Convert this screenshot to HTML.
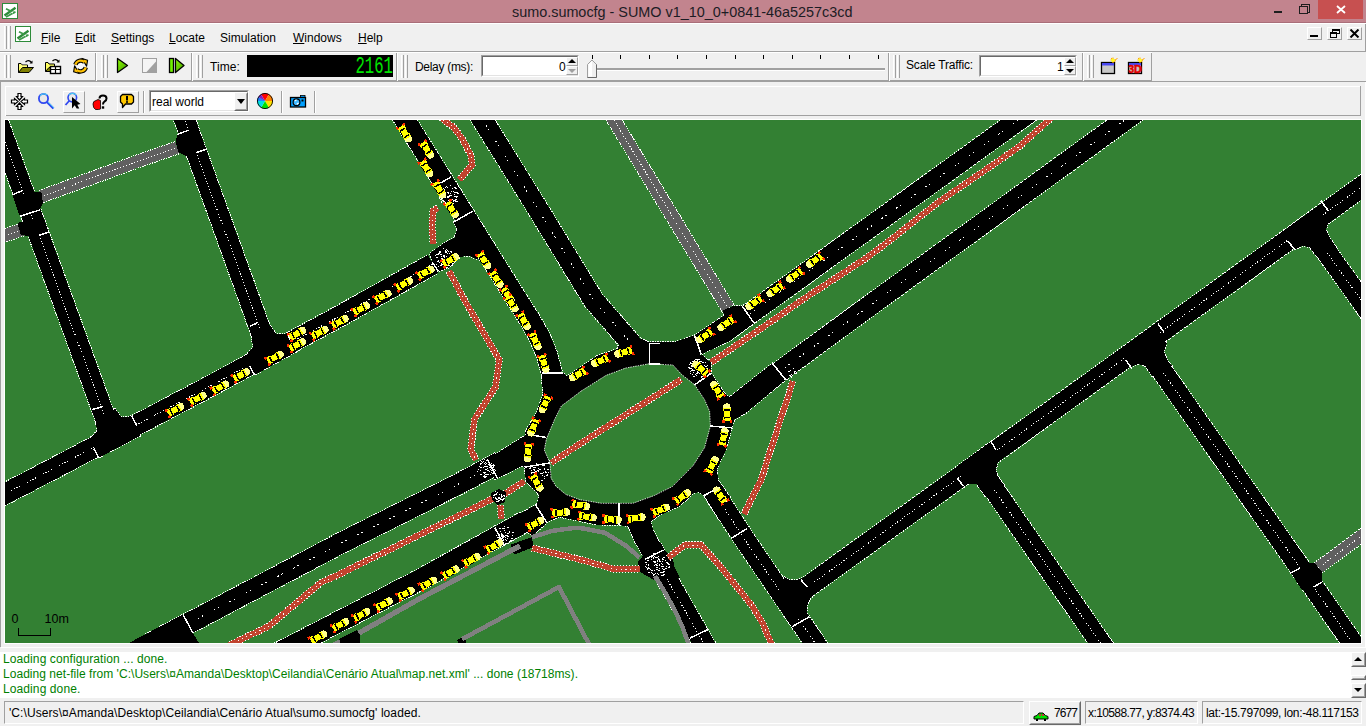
<!DOCTYPE html>
<html lang="en">
<head>
<meta charset="utf-8">
<title>sumo.sumocfg - SUMO v1_10_0+0841-46a5257c3cd</title>
<style>
*{box-sizing:border-box;margin:0;padding:0}
html,body{width:1366px;height:726px;overflow:hidden;background:#f0f0f0}
body{font-family:"Liberation Sans","DejaVu Sans",sans-serif;font-size:12px;color:#000;position:relative}
.a{position:absolute}
.t{position:absolute;white-space:nowrap;line-height:14px;height:14px;color:#000}
#titlebar{left:0;top:0;width:1366px;height:23px;background:#c2848e;border-bottom:1px solid #a96e79}
#title{left:512px;top:4px;font-size:14.4px;line-height:17px;height:17px;color:#1c1c24}
#closebtn{left:1318px;top:0;width:45px;height:19px;background:#c75050}
.grip{position:absolute;width:3px;border-left:1px solid #fff;border-right:1px solid #a0a0a0}
.vs{position:absolute;width:2px;border-left:1px solid #a0a0a0;border-right:1px solid #fff}
.hl{position:absolute;height:1px;background:#a0a0a0}
.vl{position:absolute;width:1px;background:#a0a0a0}
.wl{background:#fff}
.menu u{text-decoration:underline;text-underline-offset:1px;text-decoration-thickness:1px}
.sunk{position:absolute;border:1px solid;border-color:#a0a0a0 #fff #fff #a0a0a0;background:#fff}
.sunk:before{content:"";position:absolute;left:0;top:0;right:0;bottom:0;border:1px solid;border-color:#696969 #e3e3e3 #e3e3e3 #696969}
.rais{position:absolute;border:1px solid;border-color:#fff #a0a0a0 #a0a0a0 #fff;background:#f0f0f0}
.rais2{position:absolute;border:1px solid;border-color:#fff #696969 #696969 #fff;background:#f0f0f0}
.rais2:before{content:"";position:absolute;left:0;top:0;right:0;bottom:0;border:1px solid;border-color:#f0f0f0 #a0a0a0 #a0a0a0 #f0f0f0}
.sb{position:absolute;top:701px;height:23px;border:1px solid;border-color:#a0a0a0 #fff #fff #a0a0a0}
#map{position:absolute;left:5px;top:120px;width:1356px;height:523px;background:#338033;overflow:hidden}
#map svg{position:absolute;left:0;top:0}
#msg{position:absolute;left:0;top:652px;width:1351px;height:46px;background:#fff}
.g{color:#008000}
.tri-u{position:absolute;width:0;height:0;border-left:4px solid transparent;border-right:4px solid transparent;border-bottom:4px solid #000}
.tri-d{position:absolute;width:0;height:0;border-left:4px solid transparent;border-right:4px solid transparent;border-top:4px solid #000}
</style>
</head>
<body>
<!-- title bar -->
<div id="titlebar" class="a"></div>
<svg class="a" style="left:2px;top:3px" width="16" height="16" viewBox="0 0 16 16"><rect x="0.5" y="0.5" width="15" height="15" fill="#fff" stroke="#2e8b3a"/><path d="M2.5 12.5L13.5 4.8" stroke="#2e8b3a" stroke-width="2.4" fill="none"/><path d="M4 14L13.5 8.8" stroke="#3c9a48" stroke-width="1.8" fill="none"/><path d="M4 5.8L12.5 10" stroke="#3c9a48" stroke-width="1.8" fill="none"/><path d="M9 9.5L11 8.3L10.8 10.5Z" fill="#fff"/></svg>
<div id="title" class="t">sumo.sumocfg - SUMO v1_10_0+0841-46a5257c3cd</div>
<div class="a" style="left:1274px;top:11px;width:8px;height:2px;background:#1e1e1e"></div>
<div class="a" style="left:1301px;top:4px;width:9px;height:9px;border:1px solid #1e1e1e"></div>
<div class="a" style="left:1299px;top:6px;width:9px;height:8px;border:1px solid #1e1e1e;background:#c2848e"></div>
<div id="closebtn" class="a"></div>
<svg class="a" style="left:1336px;top:5px" width="10" height="9" viewBox="0 0 10 9"><path d="M1 1 L9 8 M9 1 L1 8" stroke="#fff" stroke-width="1.8" fill="none"/></svg>

<!-- menu bar -->
<div class="a wl" style="left:0;top:23px;width:1366px;height:1px"></div>
<div class="grip" style="left:4px;top:26px;height:23px"></div>
<div class="grip" style="left:8px;top:26px;height:23px"></div>
<svg class="a" style="left:15px;top:26px" width="16" height="16" viewBox="0 0 16 16"><rect x="0.5" y="0.5" width="15" height="15" fill="#fff" stroke="#2e8b3a"/><path d="M2.5 12.5L13.5 4.8" stroke="#2e8b3a" stroke-width="2.4" fill="none"/><path d="M4 14L13.5 8.8" stroke="#3c9a48" stroke-width="1.8" fill="none"/><path d="M4 5.8L12.5 10" stroke="#3c9a48" stroke-width="1.8" fill="none"/><path d="M9 9.5L11 8.3L10.8 10.5Z" fill="#fff"/></svg>
<div class="t menu" style="left:41px;top:31px"><u>F</u>ile</div>
<div class="t menu" style="left:75px;top:31px"><u>E</u>dit</div>
<div class="t menu" style="left:111px;top:31px"><u>S</u>ettings</div>
<div class="t menu" style="left:169px;top:31px"><u>L</u>ocate</div>
<div class="t menu" style="left:220px;top:31px">Simulation</div>
<div class="t menu" style="left:293px;top:31px"><u>W</u>indows</div>
<div class="t menu" style="left:358px;top:31px"><u>H</u>elp</div>
<div class="rais" style="left:1307px;top:27px;width:15px;height:13px"></div>
<div class="rais" style="left:1327px;top:27px;width:15px;height:13px"></div>
<div class="rais" style="left:1347px;top:27px;width:15px;height:13px"></div>
<div class="a" style="left:1310px;top:35px;width:8px;height:2px;background:#000"></div>
<div class="a" style="left:1332px;top:29px;width:8px;height:5px;border:1px solid #000;border-top-width:2px"></div>
<div class="a" style="left:1330px;top:32px;width:7px;height:6px;border:1px solid #000;border-top-width:2px;background:#f0f0f0"></div>
<svg class="a" style="left:1349px;top:29px" width="11" height="9" viewBox="0 0 11 9"><path d="M1.5 0.5 L9.5 8.5 M9.5 0.5 L1.5 8.5" stroke="#000" stroke-width="2" fill="none"/></svg>
<div class="hl" style="left:0;top:51px;width:1366px"></div>
<div class="vl" style="left:1365px;top:24px;height:28px"></div>

<!-- toolbar 1 -->
<div class="a wl" style="left:0;top:52px;width:1152px;height:1px"></div>
<div class="hl" style="left:0;top:80px;width:1152px"></div>
<div class="hl" style="left:0;top:81px;width:1366px"></div>
<div class="grip" style="left:4px;top:55px;height:23px"></div>
<div class="grip" style="left:8px;top:55px;height:23px"></div>
<div class="vs" style="left:95px;top:53px;height:28px"></div>
<div class="grip" style="left:101px;top:55px;height:23px"></div>
<div class="grip" style="left:105px;top:55px;height:23px"></div>
<div class="vs" style="left:191px;top:53px;height:28px"></div>
<div class="grip" style="left:196px;top:55px;height:23px"></div>
<div class="grip" style="left:200px;top:55px;height:23px"></div>
<div class="t" style="left:210px;top:60px;letter-spacing:0.1px">Time:</div>
<div class="a" style="left:247px;top:55px;width:146px;height:22px;background:#000"></div>
<div class="a" id="lcd" style="left:293px;top:55px;width:100px;height:24px;color:#00e400;font-family:'Liberation Mono',monospace;font-size:23px;line-height:24px;text-align:right;transform:scaleX(0.68);transform-origin:100% 50%;white-space:nowrap">2161</div>
<div class="vs" style="left:396px;top:53px;height:28px"></div>
<div class="grip" style="left:401px;top:55px;height:23px"></div>
<div class="grip" style="left:405px;top:55px;height:23px"></div>
<div class="t" style="left:415px;top:60px;letter-spacing:-0.3px">Delay (ms):</div>
<div class="sunk" style="left:481px;top:55px;width:98px;height:22px"></div>
<div class="t" style="left:559px;top:60px">0</div>
<div class="rais" style="left:566px;top:57px;width:12px;height:9px"></div>
<div class="rais" style="left:566px;top:66px;width:12px;height:9px"></div>
<div class="tri-u" style="left:568px;top:59px"></div>
<div class="tri-d" style="left:568px;top:69px;border-top-color:#a0a0a0"></div>
<!-- slider -->
<div class="a" style="left:588px;top:68px;width:297px;height:2px;background:#a0a0a0;border-bottom:1px solid #fff;height:3px"></div>
<svg class="a" style="left:585px;top:54px" width="301" height="25" viewBox="0 0 301 25"><path d="M7.5 1v4M35.5 1v4M64.500 1v4M92.500 1v4M121.500 1v4M150.500 1v4M178.500 1v4M207.500 1v4M235.500 1v4M264.500 1v4M293.500 1v4" stroke="#000" stroke-width="1"/><path d="M2.500 10.500 L7 6 L11.500 10.500 V23.500 H2.500 Z" fill="#f0f0f0" stroke="#a0a0a0"/><path d="M3.500 10.500 L7 7 V22.500 H3.500Z" fill="#fff"/><path d="M11.500 10.500 V23.500 H2.500" fill="none" stroke="#696969"/></svg>
<div class="vs" style="left:888px;top:53px;height:28px"></div>
<div class="grip" style="left:893px;top:55px;height:23px"></div>
<div class="grip" style="left:897px;top:55px;height:23px"></div>
<div class="t" style="left:906px;top:58px;letter-spacing:-0.15px">Scale Traffic:</div>
<div class="sunk" style="left:979px;top:55px;width:98px;height:22px"></div>
<div class="t" style="left:1057px;top:60px">1</div>
<div class="rais" style="left:1064px;top:57px;width:12px;height:9px"></div>
<div class="rais" style="left:1064px;top:66px;width:12px;height:9px"></div>
<div class="tri-u" style="left:1066px;top:59px"></div>
<div class="tri-d" style="left:1066px;top:69px"></div>
<div class="vs" style="left:1082px;top:53px;height:28px"></div>
<div class="grip" style="left:1087px;top:55px;height:23px"></div>
<div class="grip" style="left:1091px;top:55px;height:23px"></div>
<div class="vl" style="left:1151px;top:53px;height:28px"></div>
<svg class="a" style="left:17px;top:57px" width="18" height="18" viewBox="0 0 18 18"><path d="M1.5 15.500V6.500H4L5 8H10.500V10" fill="#ffff60" stroke="#000"/><path d="M2 10H10V8.500H5L4 7H2Z" fill="#ffff80"/><path d="M1.5 15.500L5.5 10.500H16.500L12 15.500Z" fill="#808000" stroke="#000"/><path d="M8.5 5Q11.5 2 14.5 5.5" fill="none" stroke="#000" stroke-width="1.2"/><path d="M12.5 6.500H15.500V3.500Z" fill="#000"/></svg>
<svg class="a" style="left:44px;top:57px" width="18" height="18" viewBox="0 0 18 18"><path d="M1.5 14.500V5.500H4L5 7H10.500V10" fill="#ffff60" stroke="#000"/><path d="M1.5 14.500L5 10.500H7V14.500Z" fill="#808000" stroke="#000"/><rect x="6.5" y="9.5" width="10" height="7" fill="#fff" stroke="#000" stroke-width="1.4"/><path d="M7 12.500H16M11.5 10V16" stroke="#000" stroke-width="1.2"/><path d="M8.5 4Q11.5 1 14.5 4.5" fill="none" stroke="#000" stroke-width="1.2"/><path d="M12.5 5.500H15.500V2.500Z" fill="#000"/></svg>
<svg class="a" style="left:72px;top:57px" width="18" height="18" viewBox="0 0 18 18"><circle cx="8.6" cy="9" r="3.6" fill="#f8f8f8"/><g fill="none" stroke="#000" stroke-width="4.4"><path d="M3.4 7.6A5.5 5.5 0 0 1 12.6 5.2"/><path d="M13.8 10.4A5.5 5.5 0 0 1 4.6 12.8"/></g><path d="M10 1.4L15.6 3.2L14.6 9.2Z" fill="#ffc000" stroke="#000" stroke-width="1.1" stroke-linejoin="round"/><path d="M7.2 16.600L1.6 14.800L2.6 8.800Z" fill="#ffc000" stroke="#000" stroke-width="1.1" stroke-linejoin="round"/><g fill="none" stroke="#ffc000" stroke-width="2.2"><path d="M3.4 7.600A5.5 5.5 0 0 1 12.6 5.2"/><path d="M13.8 10.400A5.5 5.5 0 0 1 4.6 12.8"/></g></svg>
<svg class="a" style="left:116px;top:57px" width="14" height="18" viewBox="0 0 14 18"><defs><linearGradient id="gp" x1="0" y1="0" x2="1" y2="1"><stop offset="0" stop-color="#90ff00"/><stop offset="1" stop-color="#3c9800"/></linearGradient></defs><path d="M1.5 1.500L11.5 8.500L1.5 15.500Z" fill="url(#gp)" stroke="#000" stroke-width="1.3" stroke-linejoin="round"/></svg>
<svg class="a" style="left:142px;top:58px" width="16" height="16" viewBox="0 0 16 16"><rect x="0.5" y="0.5" width="14" height="14" fill="#f4f4f4" stroke="#a0a0a0"/><path d="M14 3.500V14H4.500Z" fill="#a0a0a0"/></svg>
<svg class="a" style="left:168px;top:57px" width="18" height="18" viewBox="0 0 18 18"><rect x="1.5" y="1.5" width="4" height="14" fill="#70f000" stroke="#000" stroke-width="1.3"/><path d="M7.5 1.500L16 8.500L7.5 15.500Z" fill="url(#gp)" stroke="#000" stroke-width="1.3" stroke-linejoin="round"/></svg>
<svg class="a" style="left:1100px;top:56px" width="20" height="20" viewBox="0 0 20 20"><rect x="1.5" y="6.5" width="13" height="11" fill="#c8c8c8" stroke="#000" stroke-width="1.3"/><rect x="2" y="7" width="12" height="2.5" fill="#4848f0"/><path d="M13 6.500L17.5 2M10.5 4H16M13 1.500V7M11 2L15.5 6" stroke="#ffa000" stroke-width="1"/><circle cx="13" cy="4.2" r="1.8" fill="#ffff20"/></svg>
<svg class="a" style="left:1127px;top:56px" width="20" height="20" viewBox="0 0 20 20"><rect x="1.5" y="6.5" width="13" height="11" fill="#c8c8c8" stroke="#000" stroke-width="1.3"/><rect x="2" y="7" width="12" height="2.5" fill="#4848f0"/><text x="1.2" y="17" font-family="Liberation Sans,sans-serif" font-weight="bold" font-size="10.5" fill="#e00000" stroke="#e00000" stroke-width="0.5" textLength="13.5">3D</text><path d="M13 6.500L17.5 2M10.5 4H16M13 1.500V7M11 2L15.5 6" stroke="#ffa000" stroke-width="1"/><circle cx="13" cy="4.2" r="1.8" fill="#ffff20"/></svg>


<!-- MDI frame + view toolbar -->
<div class="vl" style="left:0;top:81px;height:566px"></div>
<div class="a wl" style="left:5px;top:86px;width:1355px;height:1px"></div>
<div class="a wl" style="left:5px;top:86px;width:1px;height:30px"></div>
<div class="hl" style="left:6px;top:115px;width:1355px"></div>
<div class="vl" style="left:1360px;top:86px;height:30px"></div>
<div class="rais" style="left:63px;top:91px;width:22px;height:22px"></div>
<div class="rais" style="left:117px;top:91px;width:22px;height:22px"></div>
<div class="vs" style="left:143px;top:91px;height:22px"></div>
<div class="sunk" style="left:149px;top:90px;width:100px;height:22px"></div>
<div class="t" style="left:152px;top:95px">real world</div>
<div class="rais2" style="left:234px;top:92px;width:14px;height:19px"></div>
<div class="tri-d" style="left:237px;top:99px;border-left-width:4.5px;border-right-width:4.5px;border-top-width:5px"></div>
<div class="vs" style="left:281px;top:91px;height:22px"></div>
<div class="vs" style="left:314px;top:91px;height:22px"></div>
<svg class="a" style="left:10px;top:92px" width="19" height="19" viewBox="0 0 19 19"><g fill="#fff" stroke="#000" stroke-width="1.2" stroke-linejoin="miter"><path d="M8 1.500H11V4.500H12.500L9.5 8L6.5 4.500H8Z"/><path d="M8 17.500H11V14.500H12.500L9.5 11L6.5 14.500H8Z"/><path d="M1.5 8V11H4.500V12.500L8 9.500L4.5 6.500V8Z"/><path d="M17.5 8V11H14.500V12.500L11 9.500L14.5 6.500V8Z"/></g></svg>
<svg class="a" style="left:37px;top:92px" width="19" height="19" viewBox="0 0 19 19"><path d="M10 10L16.5 16.5" stroke="#3048f0" stroke-width="2.4"/><path d="M10.5 9.500L17 16" stroke="#48c8f0" stroke-width="1"/><circle cx="6.5" cy="6.5" r="4.6" fill="#e8e8e8" stroke="#3048f0" stroke-width="1.8"/><path d="M3 4A4.8 4.8 0 0 1 10 3" fill="none" stroke="#48c8f0" stroke-width="1.2"/></svg>
<svg class="a" style="left:64px;top:92px" width="19" height="19" viewBox="0 0 19 19"><path d="M5.5 8.500L1.5 13" stroke="#3048f0" stroke-width="1.8"/><circle cx="8.3" cy="5.6" r="4.3" fill="#e8e8e8" stroke="#3048f0" stroke-width="1.6"/><path d="M5 3A4.5 4.5 0 0 1 12 3" fill="none" stroke="#48c8f0" stroke-width="1.2"/><path d="M8 5L16.5 12L13.3 12.700L15.3 16.500H12.700L10.7 13.300L8 16.500Z" fill="#000"/></svg>
<svg class="a" style="left:92px;top:93px" width="17" height="18" viewBox="0 0 17 18"><path d="M1 11Q1 8 4 7.500L6 6.500L8.5 7.500V16L6.5 16.500H3.500Q1 15 1 11Z" fill="#f00" stroke="#000" stroke-width="0.8"/><path d="M7.5 5.500Q7.5 2.5 11 2.500Q14.5 2.5 14.5 5.500Q14.5 7.5 12.5 8.500Q11 9.5 11 11.5" fill="none" stroke="#000" stroke-width="2"/><rect x="9.8" y="13.3" width="2.4" height="2.4" fill="#000"/></svg>
<svg class="a" style="left:119px;top:93px" width="17" height="16" viewBox="0 0 17 16"><path d="M3.5 1.500H12.500L14.5 3.500V9L12.5 11H6.500L3.5 14.500V11L1.5 9V3.500Z" fill="#ffc800" stroke="#000" stroke-width="1.3" stroke-linejoin="round"/><rect x="7" y="3" width="2" height="4.5" fill="#000"/><rect x="7" y="8.2" width="2" height="1.6" fill="#000"/></svg>
<svg class="a" style="left:256px;top:92px" width="18" height="18" viewBox="0 0 18 18"><g transform="translate(9 9)"><path d="M0 0L-3.9-6.700A7.8 7.8 0 0 1 3.9-6.700Z" fill="#f00"/><path d="M0 0L3.9-6.700A7.8 7.8 0 0 1 7.8 0Z" fill="#ff8000"/><path d="M0 0L7.8 0A7.8 7.8 0 0 1 3.9 6.700Z" fill="#ffe000"/><path d="M0 0L3.9 6.700A7.8 7.8 0 0 1-3.9 6.700Z" fill="#00e000"/><path d="M0 0L-3.9 6.700A7.8 7.8 0 0 1-7.8 0Z" fill="#00e0e0"/><path d="M0 0L-7.8 0A7.8 7.8 0 0 1-6.7-3.900Z" fill="#2080ff"/><path d="M0 0L-7.8 0A7.8 7.8 0 0 1-6.7-3.900Z" fill="#2080ff"/><path d="M0 0L-6.7-3.900A7.8 7.8 0 0 1-3.9-6.700Z" fill="#8020c0"/><circle r="7.6" fill="none" stroke="#000" stroke-width="0.9"/></g></svg>
<svg class="a" style="left:289px;top:94px" width="19" height="15" viewBox="0 0 19 15"><rect x="11.5" y="1.5" width="4.5" height="2" fill="#00a0ff" stroke="#000" stroke-width="0.8"/><rect x="1.5" y="3.5" width="15" height="9.5" fill="#00a0ff" stroke="#000" stroke-width="1.3"/><circle cx="7.5" cy="8.3" r="3.4" fill="#40b8ff" stroke="#000" stroke-width="1.2"/><path d="M5.8 7L7.5 5.800M7.8 10.200L9.5 9" stroke="#fff" stroke-width="1.2"/><rect x="12.5" y="5.5" width="2" height="2" fill="#000"/></svg>

<!-- map -->
<div id="map">
<svg width="1356" height="523" viewBox="5 120 1356 523" shape-rendering="crispEdges">
<g fill="none" stroke="#fff" stroke-width="1" stroke-dasharray="1.5 1" stroke-linejoin="round">
<polyline points="-16.1,114.6 52.4,303.6 95.9,423.6"/>
<polyline points="4.1,107.4 72.6,296.4 116.1,416.4"/>
<polyline points="171,113.8 174.8,123.7 239.5,303.6 253.9,343.6"/>
<polyline points="191,106.2 194.8,116.3 259.7,296.4 274.1,336.4"/>
<polyline points="-0.1,508.5 55,480 205,400.9 345.2,325.4 438.2,273.3"/>
<polyline points="-9.9,489.5 45,461 195,382.1 334.8,306.6 427.8,254.7"/>
<polyline points="389.8,115.5 395.9,125.6 508.2,305.7 520.8,325.5 530.1,342 536.8,358.4 541.7,376.7"/>
<polyline points="408.2,104.5 414.1,114.4 526.3,294.3 539.2,314.5 549.4,332.6 557.2,351.6 562.3,371.3"/>
<polyline points="467.4,115.6 473.6,125.6 529.4,215.6 584.7,306.3 624.4,352"/>
<polyline points="485.6,104.4 491.8,114.4 547.6,204.4 602.1,293.7 640.6,338"/>
<polyline points="1026.3,101.3 1012.3,111.3 762.8,291.3 718.8,322.8"/>
<polyline points="1038.7,118.7 1024.7,128.7 775.2,308.7 731.2,340.2"/>
<polyline points="1132.8,101.3 1118.7,111.3 871.2,291.4 785.6,353.9 769.6,365.9"/>
<polyline points="1145.2,118.7 1131.3,128.7 883.8,308.6 798.4,371.1 782.4,383.1"/>
<polyline points="801.3,604.7 1032.3,438.1 1366.3,196.7 1378.2,188.1"/>
<polyline points="788.7,587.3 1019.7,420.7 1353.7,179.3 1365.8,170.7"/>
<polyline points="975.2,481.1 1020.2,546.1 1091.8,649.2 1098.3,658.3"/>
<polyline points="992.8,468.9 1037.8,533.9 1109.2,636.8 1115.7,645.7"/>
<polyline points="1144.2,364.1 1291.2,573.7 1343.7,649.1 1351.2,660"/>
<polyline points="1161.8,351.9 1308.8,561.5 1361.3,636.9 1368.8,648"/>
<polyline points="1306.3,242.2 1352.3,306.2 1366.2,326.1"/>
<polyline points="1323.7,229.8 1369.7,293.8 1383.8,313.9"/>
<polyline points="155,653.2 175,642.7 344.9,553.1 464.9,492.8 505,471.4"/>
<polyline points="145,634.2 165,623.7 335.1,534.1 455.1,473.8 495,452.6"/>
<polyline points="274.9,666.9 284.9,661.7 344.9,630.6 425.1,589.1 505.2,544.7 530.2,530.9"/>
<polyline points="265.1,647.9 275.1,642.7 335.1,611.6 414.9,570.3 494.8,525.9 519.8,512.1"/>
<polyline points="706,499.8 736.1,545.9 806.1,648.9 813,659.7"/>
<polyline points="724,488.2 753.9,534.1 823.9,637.1 831,648.3"/>
<polyline points="640.4,552.6 644.2,556.3 658,585 694.2,648.4 700.8,659.4"/>
<polyline points="655.6,537.4 661.8,543.7 677,575 712.8,637.6 719.2,648.6"/>
<polyline points="43.5,202.6 142.2,166.6 179.1,153.8"/>
<polyline points="39.1,190.4 137.8,154.4 174.9,141.6"/>
<polyline points="-0.9,244.4 26.1,235.4"/>
<polyline points="-5.1,231.6 21.9,222.6"/>
<polyline points="602,113.6 608,123.6 717.1,303.6 722.1,311.7"/>
<polyline points="614,106.4 620,116.4 728.9,296.4 733.9,304.3"/>
<polyline points="1321.8,573.2 1363.9,542.2 1375.9,533.2"/>
<polyline points="1314.2,562.8 1356.1,531.8 1368.1,522.8"/>
<polygon points="541.5,372.9 563,372.9 567.1,376.2 597.7,355.5 617.5,349 617.5,346.4 626,340 641,338.5 649,342.3 674.7,342 694.5,335.4 724.3,315.5 740,333 729.3,341.2 701.2,354.4 711,362.6 711.2,373.2 724.5,393 729.4,397.2 772.4,363.3 785.6,379.8 746,412.9 734.4,419.5 731.9,427.8 726.1,449.3 717,469 717.9,480 730,497 720,521 704,495.5 699,492.2 694,493 679.2,506.3 657.7,516.2 651,521.2 652.7,529.4 662.6,549.3 642.8,555.9 634.5,541 628,526 619.7,525.3 596.5,524.5 580,521.2 559.2,516.8 547.6,521.7 532.7,535.8 510,519 536.9,504.4 539.3,495.3 526,481.2 524.5,468 522.8,465.5 494.7,479.6 486.4,459.8 526,435 525,432.4 536.5,412.6 543.1,394.4" stroke-width="1.6"/>
<polygon points="453.7,222 472.7,211.2 492.6,246 476.9,259.2 469.4,255.9 461.2,256.7 457,259.2 449.6,267.4 435.5,272.4 429.8,253.4 444.6,242.6 454.5,237.7 457,229.4" stroke-width="1.6"/>
<polygon points="95.5,418 97,431 89.7,438.6 98.8,457.6 140,436 131.8,416.3 121,417 115.3,408.8" stroke-width="1.6"/>
<polygon points="251.2,333.8 253,347 245,356.5 254.5,375 296,352 287.6,334.6 276,333.8 270.2,325.5" stroke-width="1.6"/>
<polygon points="963.8,486.1 967.9,483.6 976.2,483.6 985,496 1004,485 997.7,476.2 996,469.6 997.7,462.1 1002.6,457.2 991,441.5 957.2,466" stroke-width="1.6"/>
<polygon points="1130.5,367.2 1138,364 1145.5,366 1152,376 1172,366 1167.9,361 1164,352 1166.6,343.6 1155,328 1120,352" stroke-width="1.6"/>
<polygon points="1294.8,249.4 1302,246 1309.7,247 1316,256 1336,247 1330.9,239.5 1326,230 1328.4,222 1318,207 1284,233" stroke-width="1.6"/>
<polygon points="784.5,577 790,580 796,580 800.7,578.8 808,574.5 820,590 815.6,593.2 810,599 807,606 807,611.9 790,622 775,600" stroke-width="1.6"/>
<polygon points="724.3,315.5 722.6,310.6 734.2,305.6 742.5,306.4 754,323 740,333" stroke-width="1.6"/>
</g>
<g fill="none" stroke-linejoin="round">
<polyline points="-6,111 62.5,300 106,420" stroke="#000" stroke-width="20.4"/>
<polyline points="181,110 184.8,120 249.6,300 264,340" stroke="#000" stroke-width="20.4"/>
<polyline points="-5,499 50,470.5 200,391.5 340,316 433,264" stroke="#000" stroke-width="20.4"/>
<polyline points="399,110 405,120 517.2,300 530,320 539.8,337.3 547,355 552,374" stroke="#000" stroke-width="20.4"/>
<polyline points="476.5,110 482.7,120 538.5,210 593.4,300 632.5,345" stroke="#000" stroke-width="20.4"/>
<polyline points="1032.5,110 1018.5,120 769,300 725,331.5" stroke="#000" stroke-width="20.4"/>
<polyline points="1139,110 1125,120 877.5,300 792,362.5 776,374.5" stroke="#000" stroke-width="20.4"/>
<polyline points="795,596 1026,429.4 1360,188 1372,179.4" stroke="#000" stroke-width="20.4"/>
<polyline points="984,475 1029,540 1100.5,643 1107,652" stroke="#000" stroke-width="20.4"/>
<polyline points="1153,358 1300,567.6 1352.5,643 1360,654" stroke="#000" stroke-width="20.4"/>
<polyline points="1315,236 1361,300 1375,320" stroke="#000" stroke-width="20.4"/>
<polyline points="150,643.7 170,633.2 340,543.6 460,483.3 500,462" stroke="#000" stroke-width="20.4"/>
<polyline points="270,657.4 280,652.2 340,621.1 420,579.7 500,535.3 525,521.5" stroke="#000" stroke-width="20.4"/>
<polyline points="715,494 745,540 815,643 822,654" stroke="#000" stroke-width="20.4"/>
<polyline points="648,545 653,550 667.5,580 703.5,643 710,654" stroke="#000" stroke-width="20.4"/>
<polyline points="41.3,196.5 140,160.5 177,147.7" stroke="#606060" stroke-width="11.9"/>
<polyline points="-3,238 24,229" stroke="#606060" stroke-width="12.4"/>
<polyline points="608,110 614,120 723,300 728,308" stroke="#606060" stroke-width="12.9"/>
<polyline points="1318,568 1360,537 1372,528" stroke="#606060" stroke-width="11.9"/>
</g>
<g fill="none" stroke="#fff" stroke-width="1">
<polyline points="-6,111 62.5,300 106,420" stroke-dasharray="1 2"/>
<polyline points="181,110 184.8,120 249.6,300 264,340" stroke-dasharray="1 2"/>
<polyline points="-5,499 50,470.5 200,391.5 340,316 433,264" stroke-dasharray="1.5 1.5 1.5 1.5 1.5 1.5 1.5 7.5"/>
<polyline points="476.5,110 482.7,120 538.5,210 593.4,300 632.5,345" stroke-dasharray="1.5 3 1.5 12"/>
<polyline points="1032.5,110 1018.5,120 769,300 725,331.5" stroke-dasharray="1.5 3 1.5 12"/>
<polyline points="1139,110 1125,120 877.5,300 792,362.5 776,374.5" stroke-dasharray="1.5 3 1.5 12"/>
<polyline points="795,596 1026,429.4 1360,188 1372,179.4" stroke-dasharray="1 2"/>
<polyline points="984,475 1029,540 1100.5,643 1107,652" stroke-dasharray="1 2"/>
<polyline points="1153,358 1300,567.6 1352.5,643 1360,654" stroke-dasharray="1 2"/>
<polyline points="1315,236 1361,300 1375,320" stroke-dasharray="1 2"/>
<polyline points="150,643.7 170,633.2 340,543.6 460,483.3 500,462" stroke-dasharray="1.5 3 1.5 12"/>
<polyline points="715,494 745,540 815,643 822,654" stroke-dasharray="1 2"/>
<polyline points="648,545 653,550 667.5,580 703.5,643 710,654" stroke-dasharray="1 2"/>
<polyline points="41.3,196.5 140,160.5 177,147.7" stroke-dasharray="1 2"/>
<polyline points="-3,238 24,229" stroke-dasharray="1 2"/>
<polyline points="608,110 614,120 723,300 728,308" stroke-dasharray="1 2"/>
<polyline points="1318,568 1360,537 1372,528" stroke-dasharray="1 2"/>
</g>
<polygon points="541.5,372.9 563,372.9 567.1,376.2 597.7,355.5 617.5,349 617.5,346.4 626,340 641,338.5 649,342.3 674.7,342 694.5,335.4 724.3,315.5 740,333 729.3,341.2 701.2,354.4 711,362.6 711.2,373.2 724.5,393 729.4,397.2 772.4,363.3 785.6,379.8 746,412.9 734.4,419.5 731.9,427.8 726.1,449.3 717,469 717.9,480 730,497 720,521 704,495.5 699,492.2 694,493 679.2,506.3 657.7,516.2 651,521.2 652.7,529.4 662.6,549.3 642.8,555.9 634.5,541 628,526 619.7,525.3 596.5,524.5 580,521.2 559.2,516.8 547.6,521.7 532.7,535.8 510,519 536.9,504.4 539.3,495.3 526,481.2 524.5,468 522.8,465.5 494.7,479.6 486.4,459.8 526,435 525,432.4 536.5,412.6 543.1,394.4" fill="#000"/>
<polygon points="453.7,222 472.7,211.2 492.6,246 476.9,259.2 469.4,255.9 461.2,256.7 457,259.2 449.6,267.4 435.5,272.4 429.8,253.4 444.6,242.6 454.5,237.7 457,229.4" fill="#000"/>
<polygon points="12.4,194.8 41.3,191.5 43,203 39.7,209.7 19.8,216.3" fill="#000"/>
<polygon points="17.4,222.9 42,216.3 47.9,232 27.3,236.1 20.7,234.5" fill="#000"/>
<polygon points="177.2,134.5 187.9,130.4 206.1,149.4 196.2,152.7 186.3,156 178.8,152.7 175.5,142" fill="#000"/>
<polygon points="95.5,418 97,431 89.7,438.6 98.8,457.6 140,436 131.8,416.3 121,417 115.3,408.8" fill="#000"/>
<polygon points="251.2,333.8 253,347 245,356.5 254.5,375 296,352 287.6,334.6 276,333.8 270.2,325.5" fill="#000"/>
<polygon points="963.8,486.1 967.9,483.6 976.2,483.6 985,496 1004,485 997.7,476.2 996,469.6 997.7,462.1 1002.6,457.2 991,441.5 957.2,466" fill="#000"/>
<polygon points="1130.5,367.2 1138,364 1145.5,366 1152,376 1172,366 1167.9,361 1164,352 1166.6,343.6 1155,328 1120,352" fill="#000"/>
<polygon points="1294.8,249.4 1302,246 1309.7,247 1316,256 1336,247 1330.9,239.5 1326,230 1328.4,222 1318,207 1284,233" fill="#000"/>
<polygon points="1290.3,572 1309.7,563.3 1314.7,563.3 1322,572 1322,582 1302,590" fill="#000"/>
<polygon points="784.5,577 790,580 796,580 800.7,578.8 808,574.5 820,590 815.6,593.2 810,599 807,606 807,611.9 790,622 775,600" fill="#000"/>
<polygon points="510.5,544.7 531.6,537.2 534,547 514,554.6" fill="#000"/>
<polygon points="457,640 464,636 467,644 459,644" fill="#000"/>
<polygon points="642.8,555.9 662.6,549.3 672.6,555.9 674,566 680,578 654,580 640,572 638,562" fill="#000"/>
<polygon points="183,614.4 125,645 200,645 192.9,633" fill="#000"/>
<polygon points="724.3,315.5 722.6,310.6 734.2,305.6 742.5,306.4 754,323 740,333" fill="#000"/>
<polygon points="581.2,391 606,375.4 625.8,368 649,363.8 673,365 681.3,374.2 694.7,384.8 704.6,399.7 709.6,411.2 710.4,426 704.6,447.6 693,465.8 685.8,473.2 672.6,486.4 654.4,495.5 632.9,503.3 601.5,503.3 580,499.7 565.8,494.5 555.9,486.2 551,478 550,463 544.3,450 546.4,439 554.7,419.2 561.3,406 568,401" fill="#338033" stroke="#fff" stroke-width="0.8" stroke-dasharray="1.5 1" stroke-linejoin="round"/>
<polyline points="440,116 443.5,120 454,127.5 463,140 470.7,154.8 472,164.8 459.5,179.7" fill="none" stroke="#c0432e" stroke-width="6.2" stroke-linejoin="round"/>
<g fill="none" stroke="#fff" stroke-width="1" stroke-linejoin="round"><polyline points="437.7,118 441.4,122.3 451.8,129.7 460.4,141.6 467.7,155.7 468.8,163.9 457.1,177.7" stroke-dasharray="1.2 1.8"/><polyline points="442.3,114 445.6,117.7 456.2,125.3 465.6,138.4 473.7,153.9 475.2,165.7 461.9,181.7" stroke-dasharray="1.2 1.8"/><polyline points="440,116 443.5,120 454,127.5 463,140 470.7,154.8 472,164.8 459.5,179.7" stroke-dasharray="1.2 3.6"/></g>
<polyline points="438,208 433,211 432.2,226 433,244" fill="none" stroke="#c0432e" stroke-width="6.2" stroke-linejoin="round"/>
<g fill="none" stroke="#fff" stroke-width="1" stroke-linejoin="round"><polyline points="436.4,205.3 430,209.2 429.1,226 429.9,244.1" stroke-dasharray="1.2 1.8"/><polyline points="439.6,210.7 436,212.8 435.3,226 436.1,243.9" stroke-dasharray="1.2 1.8"/><polyline points="438,208 433,211 432.2,226 433,244" stroke-dasharray="1.2 3.6"/></g>
<polyline points="449,271 464.4,300 499.3,359.7 495.5,387 474.4,419.5 470.7,449.3 476,460" fill="none" stroke="#c0432e" stroke-width="6.2" stroke-linejoin="round"/>
<g fill="none" stroke="#fff" stroke-width="1" stroke-linejoin="round"><polyline points="446.3,272.5 461.7,301.5 496.1,360.3 492.5,385.9 471.4,418.4 467.5,449.8 473.2,461.4" stroke-dasharray="1.2 1.8"/><polyline points="451.7,269.5 467.1,298.5 502.5,359.1 498.5,388.1 477.4,420.6 473.9,448.8 478.8,458.6" stroke-dasharray="1.2 1.8"/><polyline points="449,271 464.4,300 499.3,359.7 495.5,387 474.4,419.5 470.7,449.3 476,460" stroke-dasharray="1.2 3.6"/></g>
<polyline points="225,648 232,644 269,626 321,582.5 340,574 491.4,499.4 506.3,492.8 524.5,481.2" fill="none" stroke="#c0432e" stroke-width="6.2" stroke-linejoin="round"/>
<g fill="none" stroke="#fff" stroke-width="1" stroke-linejoin="round"><polyline points="226.5,650.7 233.4,646.7 270.7,628.6 322.7,585.2 341.3,576.8 492.7,502.2 507.8,495.5 526.2,483.8" stroke-dasharray="1.2 1.8"/><polyline points="223.5,645.3 230.6,641.3 267.3,623.4 319.3,579.8 338.7,571.2 490.1,496.6 504.8,490.1 522.8,478.6" stroke-dasharray="1.2 1.8"/><polyline points="225,648 232,644 269,626 321,582.5 340,574 491.4,499.4 506.3,492.8 524.5,481.2" stroke-dasharray="1.2 3.6"/></g>
<polyline points="550.9,463 582.8,442 681.3,379.5" fill="none" stroke="#c0432e" stroke-width="6.2" stroke-linejoin="round"/>
<g fill="none" stroke="#fff" stroke-width="1" stroke-linejoin="round"><polyline points="552.6,465.6 584.5,444.6 683,382.1" stroke-dasharray="1.2 1.8"/><polyline points="549.2,460.4 581.1,439.4 679.6,376.9" stroke-dasharray="1.2 1.8"/><polyline points="550.9,463 582.8,442 681.3,379.5" stroke-dasharray="1.2 3.6"/></g>
<polyline points="711,362.6 780,315.5 802,300 863.4,260 884,245 940,201 998.6,161 1020,146 1049,120 1057,113" fill="none" stroke="#c0432e" stroke-width="6.2" stroke-linejoin="round"/>
<g fill="none" stroke="#fff" stroke-width="1" stroke-linejoin="round"><polyline points="712.7,365.2 781.8,318 803.7,302.6 865.2,262.6 885.9,247.5 941.8,203.5 1000.4,163.5 1021.9,148.4 1051.1,122.3 1059,115.3" stroke-dasharray="1.2 1.8"/><polyline points="709.3,360 778.2,313 800.3,297.4 861.6,257.4 882.1,242.5 938.2,198.5 996.8,158.5 1018.1,143.6 1046.9,117.7 1055,110.7" stroke-dasharray="1.2 1.8"/><polyline points="711,362.6 780,315.5 802,300 863.4,260 884,245 940,201 998.6,161 1020,146 1049,120 1057,113" stroke-dasharray="1.2 3.6"/></g>
<polyline points="793,381 761,480 744,514" fill="none" stroke="#c0432e" stroke-width="6.2" stroke-linejoin="round"/>
<g fill="none" stroke="#fff" stroke-width="1" stroke-linejoin="round"><polyline points="790.1,380 758.1,478.8 741.2,512.6" stroke-dasharray="1.2 1.8"/><polyline points="795.9,382 763.9,481.2 746.8,515.4" stroke-dasharray="1.2 1.8"/><polyline points="793,381 761,480 744,514" stroke-dasharray="1.2 3.6"/></g>
<polyline points="668,558 674,553 685,545 701,545 720,566 751,604.4 762,622 772,645" fill="none" stroke="#c0432e" stroke-width="6.2" stroke-linejoin="round"/>
<g fill="none" stroke="#fff" stroke-width="1" stroke-linejoin="round"><polyline points="670,560.4 675.9,555.4 686,548.1 699.6,548.1 717.6,568 748.5,606.2 759.2,623.4 769.2,646.2" stroke-dasharray="1.2 1.8"/><polyline points="666,555.6 672.1,550.6 684,541.9 702.4,541.9 722.4,564 753.5,602.6 764.8,620.6 774.8,643.8" stroke-dasharray="1.2 1.8"/><polyline points="668,558 674,553 685,545 701,545 720,566 751,604.4 762,622 772,645" stroke-dasharray="1.2 3.6"/></g>
<polyline points="532,548 580,559.5 614,569 640,569" fill="none" stroke="#c0432e" stroke-width="6.2" stroke-linejoin="round"/>
<g fill="none" stroke="#fff" stroke-width="1" stroke-linejoin="round"><polyline points="531.3,551 579.2,562.5 613.6,572.1 640,572.1" stroke-dasharray="1.2 1.8"/><polyline points="532.7,545 580.8,556.5 614.4,565.9 640,565.9" stroke-dasharray="1.2 1.8"/><polyline points="532,548 580,559.5 614,569 640,569" stroke-dasharray="1.2 3.6"/></g>
<polyline points="500.5,505 501.3,519" fill="none" stroke="#c0432e" stroke-width="6.2" stroke-linejoin="round"/>
<g fill="none" stroke="#fff" stroke-width="1" stroke-linejoin="round"><polyline points="497.4,505.2 498.2,519.2" stroke-dasharray="1.2 1.8"/><polyline points="503.6,504.8 504.4,518.8" stroke-dasharray="1.2 1.8"/><polyline points="500.5,505 501.3,519" stroke-dasharray="1.2 3.6"/></g>
<polyline points="330,647 359,633 420,598.5 512,550 520,546" fill="none" stroke="#808080" stroke-width="5.2" stroke-linejoin="round"/>
<polyline points="531.6,537.2 552.6,530.8 564,529.2 575.7,527.8 583.9,528.5 604.8,532.7 626.3,546 639.5,557.5" fill="none" stroke="#808080" stroke-width="4.5" stroke-linejoin="round"/>
<polyline points="655,576 666,594 675,611 682,626 689,645" fill="none" stroke="#808080" stroke-width="4.5" stroke-linejoin="round"/>
<polyline points="462,639.2 559,587 588.9,644" fill="none" stroke="#808080" stroke-width="4.5" stroke-linejoin="round"/>
<polygon points="339.3,638.7 356.7,630 360.4,635.6 359.5,644 340.5,644" fill="#000"/>
<polygon points="491,493 499,489 506,492 505,502 498,505 492,500" fill="#000"/>
<line x1="12.4" y1="194.8" x2="22.3" y2="190.7" stroke="#fff" stroke-width="1.5"/>
<line x1="19.8" y1="216.3" x2="40.5" y2="209.7" stroke="#fff" stroke-width="1.5"/>
<line x1="38.8" y1="235.3" x2="48.8" y2="232" stroke="#fff" stroke-width="1.5"/>
<line x1="177.2" y1="134.5" x2="187.9" y2="130.4" stroke="#fff" stroke-width="1.5"/>
<line x1="196.2" y1="152.7" x2="206.1" y2="149.4" stroke="#fff" stroke-width="1.5"/>
<line x1="92.1" y1="409.7" x2="102.9" y2="406.4" stroke="#fff" stroke-width="1.5"/>
<line x1="93.8" y1="448.5" x2="98.8" y2="457.6" stroke="#fff" stroke-width="1.5"/>
<line x1="131.8" y1="416.3" x2="136.8" y2="425.4" stroke="#fff" stroke-width="1.5"/>
<line x1="249.6" y1="326.4" x2="257" y2="323" stroke="#fff" stroke-width="1.5"/>
<line x1="249.6" y1="366" x2="254.5" y2="375" stroke="#fff" stroke-width="1.5"/>
<line x1="287.6" y1="334.6" x2="290" y2="339.6" stroke="#fff" stroke-width="1.5"/>
<line x1="440.5" y1="183" x2="451" y2="177" stroke="#fff" stroke-width="1.5"/>
<line x1="453.7" y1="222" x2="472.7" y2="211.2" stroke="#fff" stroke-width="1.5"/>
<line x1="432.4" y1="262.2" x2="438.2" y2="271.3" stroke="#fff" stroke-width="1.5"/>
<line x1="541.5" y1="372.9" x2="563" y2="372.9" stroke="#fff" stroke-width="1.5"/>
<line x1="649.5" y1="343" x2="649.5" y2="364.5" stroke="#fff" stroke-width="1.5"/>
<line x1="649" y1="343.5" x2="660" y2="343.5" stroke="#fff" stroke-width="1.5"/>
<line x1="649" y1="364" x2="660" y2="364" stroke="#fff" stroke-width="1.5"/>
<line x1="742.5" y1="306.4" x2="754" y2="323" stroke="#fff" stroke-width="1.5"/>
<line x1="694.5" y1="335.4" x2="701.2" y2="354.4" stroke="#fff" stroke-width="1.5"/>
<line x1="694.7" y1="384.8" x2="711.2" y2="373.2" stroke="#fff" stroke-width="1.5"/>
<line x1="710.4" y1="426" x2="731.9" y2="427.8" stroke="#fff" stroke-width="1.5"/>
<line x1="772.4" y1="363.3" x2="785.6" y2="379.8" stroke="#fff" stroke-width="1.5"/>
<line x1="618.8" y1="503.3" x2="618.8" y2="525.3" stroke="#fff" stroke-width="1.5"/>
<line x1="704" y1="495.5" x2="720" y2="487.3" stroke="#fff" stroke-width="1.5"/>
<line x1="731" y1="538.4" x2="747.2" y2="528.5" stroke="#fff" stroke-width="1.5"/>
<line x1="792" y1="626.8" x2="809.4" y2="616.8" stroke="#fff" stroke-width="1.5"/>
<line x1="645.3" y1="559.2" x2="663.5" y2="550.1" stroke="#fff" stroke-width="1.5"/>
<line x1="690" y1="638" x2="708.6" y2="629.3" stroke="#fff" stroke-width="1.5"/>
<line x1="531" y1="435" x2="546" y2="437.4" stroke="#fff" stroke-width="1.5"/>
<line x1="524.5" y1="467.2" x2="550" y2="463" stroke="#fff" stroke-width="1.5"/>
<line x1="487.3" y1="459" x2="497.2" y2="478" stroke="#fff" stroke-width="1.5"/>
<line x1="535.2" y1="504.4" x2="546.8" y2="522.6" stroke="#fff" stroke-width="1.5"/>
<line x1="494.7" y1="527.5" x2="504.6" y2="545.7" stroke="#fff" stroke-width="1.5"/>
<line x1="183" y1="614.4" x2="192.9" y2="633" stroke="#fff" stroke-width="1.5"/>
<line x1="957.2" y1="478.7" x2="963.8" y2="486.1" stroke="#fff" stroke-width="1.5"/>
<line x1="991" y1="441.5" x2="996" y2="449.8" stroke="#fff" stroke-width="1.5"/>
<line x1="1125.5" y1="359.7" x2="1131.8" y2="368.4" stroke="#fff" stroke-width="1.5"/>
<line x1="1157.9" y1="323.6" x2="1164.1" y2="332.4" stroke="#fff" stroke-width="1.5"/>
<line x1="1287.3" y1="240.7" x2="1294.8" y2="249.4" stroke="#fff" stroke-width="1.5"/>
<line x1="1320.9" y1="200.9" x2="1328.4" y2="210.8" stroke="#fff" stroke-width="1.5"/>
<line x1="1289.8" y1="573.3" x2="1299.8" y2="568.3" stroke="#fff" stroke-width="1.5"/>
<line x1="1313.5" y1="587" x2="1322.2" y2="582" stroke="#fff" stroke-width="1.5"/>
<line x1="800.7" y1="579.5" x2="807" y2="587" stroke="#fff" stroke-width="1.5"/>
<path d="M448.5 202.5h1M453.5 192.5h2M448.5 195.5h1M447.5 200.5h2M438.5 197.5h1M440.5 201.5h1M441.5 188.5h2M446.5 196.5h1M452.5 203.5h1M446.5 197.5h1M439.5 196.5h1M445.5 186.5h1M446.5 187.5h1M449.5 193.5h1M442.5 195.5h2M440.5 198.5h1M439.5 199.5h2M442.5 201.5h2M448.5 201.5h1M453.5 187.5h2M444.5 187.5h1M456.5 193.5h2M453.5 200.5h2M451.5 188.5h1M452.5 200.5h2M450.5 195.5h1M444.5 197.5h1M441.5 198.5h1M455.5 197.5h1M441.5 200.5h2M454.5 188.5h2M447.5 197.5h1M454.5 199.5h1M456.5 192.5h1M444.5 192.5h1M453.5 194.5h1M456.5 193.5h1M440.5 202.5h1M442.5 189.5h2M455.5 201.5h2M446.5 203.5h2M447.5 200.5h1M440.5 194.5h1M449.5 185.5h1M455.5 196.5h2M452.5 201.5h1M439.5 197.5h1M443.5 192.5h1M449.5 195.5h2M453.5 196.5h2M440.5 197.5h1M449.5 199.5h1M450.5 191.5h1M454.5 201.5h2M446.5 192.5h2M449.5 204.5h1M443.5 202.5h2M446.5 192.5h1M455.5 192.5h1M438.5 198.5h1M455.5 199.5h1M452.5 191.5h1M447.5 193.5h1M443.5 203.5h2M449.5 200.5h2M454.5 199.5h2M451.5 199.5h1M439.5 197.5h1M441.5 198.5h1M447.5 196.5h2" stroke="#fff" stroke-width="1" fill="none"/>
<path d="M443.5 261.5h1M440.5 258.5h1M435.5 264.5h1M444.5 265.5h1M445.5 249.5h1M445.5 267.5h2M446.5 250.5h1M446.5 263.5h2M452.5 256.5h1M450.5 262.5h2M439.5 261.5h1M440.5 258.5h2M443.5 257.5h1M435.5 254.5h2M445.5 264.5h1M439.5 260.5h1M442.5 267.5h1M451.5 260.5h1M435.5 257.5h2M437.5 266.5h1M452.5 262.5h2M439.5 254.5h1M436.5 261.5h2M434.5 255.5h1M447.5 251.5h1M444.5 250.5h1M450.5 265.5h1M441.5 259.5h2M452.5 263.5h1M442.5 248.5h1M440.5 263.5h1M444.5 252.5h2M442.5 255.5h2M445.5 264.5h1M443.5 266.5h1M443.5 259.5h1M437.5 260.5h1M451.5 258.5h1M449.5 257.5h1M445.5 260.5h2M447.5 265.5h1M437.5 253.5h2M443.5 268.5h1M446.5 253.5h1M440.5 254.5h1M443.5 264.5h1M444.5 265.5h2M450.5 252.5h1M444.5 260.5h1M443.5 263.5h1M439.5 261.5h1M452.5 261.5h2M449.5 263.5h2M438.5 251.5h2M449.5 260.5h1M445.5 267.5h1M439.5 265.5h2M440.5 264.5h1M438.5 251.5h1M440.5 263.5h1M452.5 262.5h2M442.5 256.5h2M450.5 265.5h2M449.5 251.5h2M438.5 252.5h2M438.5 262.5h1M444.5 262.5h2M445.5 256.5h1M448.5 253.5h1M447.5 265.5h2M444.5 251.5h2M440.5 259.5h2M437.5 254.5h1M440.5 256.5h1M451.5 263.5h1M441.5 264.5h1M449.5 262.5h1M446.5 267.5h1M444.5 265.5h1M446.5 260.5h2" stroke="#fff" stroke-width="1" fill="none"/>
<path d="M479.5 463.5h2M492.5 465.5h2M491.5 469.5h1M480.5 461.5h1M479.5 474.5h1M478.5 466.5h1M484.5 462.5h1M492.5 464.5h1M485.5 466.5h2M483.5 466.5h1M486.5 468.5h1M489.5 467.5h1M483.5 477.5h2M490.5 463.5h1M492.5 465.5h1M483.5 473.5h1M489.5 466.5h1M483.5 475.5h1M479.5 464.5h1M482.5 476.5h1M484.5 464.5h1M484.5 466.5h1M490.5 466.5h1M493.5 469.5h1M479.5 474.5h1M489.5 469.5h1M488.5 471.5h1M482.5 472.5h2M485.5 474.5h2M485.5 460.5h1M494.5 470.5h1M487.5 474.5h1M490.5 465.5h2M480.5 467.5h1M482.5 476.5h2M489.5 474.5h1M486.5 470.5h2M479.5 467.5h1M485.5 463.5h1M479.5 470.5h1M492.5 467.5h1M483.5 472.5h2M482.5 467.5h1M490.5 472.5h1M490.5 470.5h1M476.5 471.5h1M491.5 467.5h1M483.5 463.5h1M484.5 474.5h1M491.5 473.5h2M492.5 466.5h1M488.5 465.5h1M484.5 476.5h2M480.5 474.5h1M482.5 461.5h1M480.5 474.5h1M487.5 464.5h2M483.5 459.5h1M481.5 462.5h1M477.5 469.5h1" stroke="#fff" stroke-width="1" fill="none"/>
<path d="M539.5 464.5h1M537.5 471.5h1M533.5 467.5h2M531.5 479.5h1M533.5 473.5h1M543.5 469.5h1M540.5 480.5h2M536.5 482.5h2M543.5 476.5h1M533.5 478.5h1M534.5 474.5h1M534.5 465.5h1M544.5 471.5h1M541.5 465.5h1M546.5 469.5h2M528.5 468.5h2M539.5 473.5h1M537.5 480.5h1M534.5 471.5h2M534.5 472.5h2M536.5 481.5h1M533.5 473.5h1M542.5 465.5h2M546.5 474.5h1M533.5 467.5h2M533.5 469.5h1M532.5 472.5h2M539.5 473.5h1M529.5 467.5h1M542.5 472.5h1M543.5 468.5h1M528.5 476.5h1M530.5 472.5h2M541.5 464.5h1M537.5 468.5h1M535.5 463.5h1M540.5 473.5h2M538.5 469.5h2M528.5 476.5h1M547.5 472.5h1M533.5 470.5h1M533.5 467.5h2M533.5 477.5h1M533.5 480.5h2M531.5 478.5h1M531.5 465.5h2M540.5 464.5h1M530.5 470.5h1M540.5 480.5h2M543.5 478.5h1M544.5 472.5h2M541.5 475.5h1M532.5 469.5h2M530.5 473.5h1M530.5 480.5h2M532.5 467.5h1M545.5 475.5h2M543.5 478.5h1M537.5 470.5h1M536.5 470.5h1" stroke="#fff" stroke-width="1" fill="none"/>
<path d="M497.5 498.5h2M503.5 498.5h1M497.5 497.5h2M498.5 498.5h1M500.5 497.5h1M502.5 498.5h1M495.5 493.5h1M495.5 494.5h1M503.5 498.5h1M494.5 498.5h2M496.5 501.5h1M502.5 499.5h1M495.5 499.5h1M494.5 494.5h1M496.5 492.5h1M492.5 497.5h1M496.5 501.5h2M498.5 494.5h1M492.5 495.5h2M494.5 497.5h1M501.5 499.5h1M500.5 499.5h1M500.5 496.5h2M493.5 494.5h1M496.5 499.5h1M494.5 494.5h1M502.5 495.5h2M503.5 498.5h1M494.5 491.5h1M497.5 500.5h2M495.5 501.5h1M499.5 498.5h1M499.5 499.5h2M498.5 500.5h1M502.5 498.5h2M498.5 498.5h1M500.5 494.5h1M503.5 496.5h1M500.5 495.5h1M501.5 500.5h1" stroke="#fff" stroke-width="1" fill="none"/>
<path d="M504.5 544.5h1M504.5 537.5h1M503.5 544.5h1M502.5 536.5h1M497.5 537.5h1M508.5 532.5h1M503.5 536.5h1M497.5 534.5h1M502.5 528.5h1M505.5 535.5h2M504.5 532.5h1M499.5 541.5h1M508.5 531.5h1M500.5 533.5h1M501.5 535.5h2M506.5 543.5h2M496.5 537.5h1M502.5 540.5h1M508.5 541.5h1M498.5 534.5h1M511.5 532.5h2M499.5 531.5h1M497.5 534.5h1M506.5 527.5h2M498.5 534.5h1M502.5 539.5h1M498.5 538.5h2M506.5 533.5h1M509.5 541.5h1M505.5 543.5h1M509.5 540.5h1M501.5 538.5h1M506.5 533.5h2M498.5 537.5h2M510.5 538.5h1M506.5 536.5h2M500.5 534.5h2M500.5 535.5h2M504.5 535.5h1M499.5 541.5h1M503.5 530.5h1M511.5 535.5h1M510.5 538.5h2M505.5 540.5h1M501.5 536.5h2M504.5 543.5h1M501.5 537.5h2M500.5 536.5h1M500.5 535.5h1M496.5 532.5h1M504.5 539.5h1M506.5 538.5h1M501.5 528.5h1M498.5 528.5h2M510.5 540.5h2M495.5 535.5h1M498.5 535.5h1M503.5 528.5h1M502.5 540.5h1M503.5 526.5h1" stroke="#fff" stroke-width="1" fill="none"/>
<path d="M691.5 369.5h1M700.5 376.5h1M688.5 368.5h1M692.5 376.5h2M703.5 370.5h2M706.5 365.5h1M700.5 372.5h1M703.5 375.5h2M705.5 371.5h2M704.5 362.5h1M693.5 360.5h1M704.5 362.5h1M692.5 372.5h1M700.5 377.5h1M703.5 370.5h1M700.5 372.5h2M700.5 366.5h2M706.5 368.5h1M701.5 365.5h1M700.5 366.5h1M689.5 368.5h2M703.5 365.5h1M700.5 376.5h2M693.5 366.5h2M697.5 366.5h1M690.5 365.5h1M697.5 359.5h2M700.5 368.5h2M689.5 373.5h1M695.5 367.5h1M701.5 362.5h2M697.5 365.5h1M704.5 374.5h1M691.5 370.5h2M697.5 362.5h2M694.5 374.5h1M698.5 373.5h1M695.5 373.5h2M697.5 366.5h2M699.5 361.5h2M698.5 361.5h1M693.5 370.5h1M687.5 367.5h2M691.5 374.5h1M694.5 359.5h1M706.5 371.5h1M697.5 372.5h1M696.5 367.5h1M689.5 371.5h1M689.5 362.5h1M695.5 375.5h1M699.5 370.5h2M696.5 371.5h1M689.5 371.5h1M689.5 363.5h2M695.5 359.5h2M694.5 368.5h1M696.5 372.5h2M699.5 364.5h1M700.5 365.5h1M690.5 370.5h1M703.5 372.5h2M704.5 366.5h2M707.5 370.5h1M690.5 366.5h2M691.5 361.5h2M688.5 364.5h1M696.5 360.5h1M703.5 372.5h1M689.5 368.5h1" stroke="#fff" stroke-width="1" fill="none"/>
<path d="M787.5 371.5h2M793.5 372.5h1M792.5 368.5h1M793.5 373.5h1M790.5 377.5h1M794.5 373.5h2M788.5 375.5h2M790.5 374.5h1M789.5 370.5h1M794.5 371.5h1M788.5 371.5h1M793.5 371.5h1" stroke="#fff" stroke-width="1" fill="none"/>
<path d="M647.5 567.5h1M645.5 567.5h1M659.5 572.5h2M652.5 561.5h1M655.5 567.5h2M650.5 557.5h1M665.5 562.5h2M650.5 556.5h2M658.5 565.5h1M647.5 558.5h1M646.5 568.5h2M657.5 570.5h1M652.5 557.5h1M649.5 569.5h1M654.5 557.5h1M654.5 564.5h2M657.5 556.5h1M647.5 572.5h2M661.5 564.5h1M644.5 566.5h1M648.5 568.5h1M657.5 558.5h1M655.5 565.5h1M656.5 560.5h1M656.5 563.5h1M657.5 559.5h2M659.5 572.5h2M657.5 556.5h1M662.5 569.5h1M667.5 564.5h2M652.5 575.5h1M661.5 575.5h2M654.5 561.5h1M657.5 570.5h2M653.5 570.5h1M661.5 566.5h2M656.5 573.5h1M653.5 561.5h2M647.5 565.5h1M658.5 568.5h1M658.5 559.5h1M661.5 572.5h2M660.5 575.5h1M650.5 559.5h1M663.5 569.5h1M657.5 574.5h1M646.5 569.5h1M655.5 569.5h2M660.5 563.5h1M646.5 560.5h2M661.5 566.5h1M656.5 561.5h1M653.5 565.5h1M654.5 573.5h1M660.5 566.5h1M666.5 563.5h2M644.5 562.5h2M658.5 564.5h1M652.5 553.5h1M653.5 562.5h1M655.5 557.5h1M664.5 568.5h2M667.5 567.5h2M653.5 554.5h1M650.5 572.5h1M661.5 558.5h1M662.5 557.5h2M652.5 558.5h1M653.5 562.5h2M661.5 568.5h1M655.5 557.5h2M653.5 556.5h1M658.5 561.5h2M665.5 566.5h1M668.5 566.5h1M647.5 564.5h1M656.5 565.5h1M662.5 571.5h2M662.5 574.5h2M664.5 560.5h1M651.5 573.5h1M649.5 556.5h1M661.5 559.5h2M661.5 561.5h1M645.5 564.5h1M653.5 553.5h1M658.5 560.5h1M655.5 569.5h1M650.5 570.5h2M652.5 574.5h2" stroke="#fff" stroke-width="1" fill="none"/>
<path d="M719.5 501.5h2M721.5 502.5h1M719.5 500.5h1M721.5 497.5h2M725.5 500.5h1M720.5 502.5h1M725.5 501.5h1M718.5 500.5h2" stroke="#fff" stroke-width="1" fill="none"/>
<defs><g id="c"><path d="M-8.5-3.8H5.5Q9.5-3.8 9.5 0Q9.5 3.8 5.5 3.8H-8.5Z" fill="#ff0"/><path d="M5-3.8H5.5Q9.5-3.8 9.5 0Q9.5 3.8 5.5 3.8H5Z" fill="#ffff8c"/><path d="M-4.8-3V3M2.8-3V3" stroke="#000" stroke-width="1.5" fill="none"/><path d="M-4-3.8H2V-3H-4ZM-4 3.8H2V3H-4Z" fill="#000"/><path d="M-10-5h2.6v2.6h-2.6zM-10 2.4h2.6v2.6h-2.6z" fill="#ff3000"/></g></defs>
<use href="#c" transform="translate(175.5 409.5) rotate(-28.5)"/>
<use href="#c" transform="translate(197.9 398.3) rotate(-28.5)"/>
<use href="#c" transform="translate(220.3 387.1) rotate(-28.5)"/>
<use href="#c" transform="translate(241.4 374.7) rotate(-28.5)"/>
<use href="#c" transform="translate(275 357.2) rotate(-28.5)"/>
<use href="#c" transform="translate(297.4 344.6) rotate(-28.5)"/>
<use href="#c" transform="translate(319.8 332.4) rotate(-28.5)"/>
<use href="#c" transform="translate(339.8 321.7) rotate(-28.5)"/>
<use href="#c" transform="translate(361.3 308.5) rotate(-28.5)"/>
<use href="#c" transform="translate(382.8 296.1) rotate(-28.5)"/>
<use href="#c" transform="translate(404.3 283.7) rotate(-28.5)"/>
<use href="#c" transform="translate(425.8 272.1) rotate(-28.5)"/>
<use href="#c" transform="translate(450.6 259.8) rotate(-28.5)"/>
<use href="#c" transform="translate(297.4 333.4) rotate(-28.5)"/>
<use href="#c" transform="translate(405.2 133.7) rotate(58)"/>
<use href="#c" transform="translate(426.6 168.5) rotate(58)"/>
<use href="#c" transform="translate(439.6 189.7) rotate(58)"/>
<use href="#c" transform="translate(452 209.6) rotate(58)"/>
<use href="#c" transform="translate(427.1 149.9) rotate(58)"/>
<use href="#c" transform="translate(484.3 260.6) rotate(58)"/>
<use href="#c" transform="translate(496.8 279.3) rotate(58)"/>
<use href="#c" transform="translate(508 295.5) rotate(58)"/>
<use href="#c" transform="translate(511.7 303.7) rotate(58)"/>
<use href="#c" transform="translate(524.2 321.2) rotate(60)"/>
<use href="#c" transform="translate(535.4 341) rotate(65)"/>
<use href="#c" transform="translate(544.1 363.5) rotate(74)"/>
<use href="#c" transform="translate(577.7 374.7) rotate(150)"/>
<use href="#c" transform="translate(600 361) rotate(158)"/>
<use href="#c" transform="translate(623.7 352.3) rotate(165)"/>
<use href="#c" transform="translate(544.8 404.3) rotate(115)"/>
<use href="#c" transform="translate(533.2 427.4) rotate(112)"/>
<use href="#c" transform="translate(528 452.5) rotate(95)"/>
<use href="#c" transform="translate(536.9 482.9) rotate(60)"/>
<use href="#c" transform="translate(560.8 512.6) rotate(-5)"/>
<use href="#c" transform="translate(580.7 505.2) rotate(10)"/>
<use href="#c" transform="translate(587.3 516.8) rotate(8)"/>
<use href="#c" transform="translate(612.2 519.5) rotate(3)"/>
<use href="#c" transform="translate(636.2 517.9) rotate(-8)"/>
<use href="#c" transform="translate(661 509.6) rotate(-22)"/>
<use href="#c" transform="translate(682.5 496.4) rotate(-35)"/>
<use href="#c" transform="translate(712.2 465) rotate(-62)"/>
<use href="#c" transform="translate(723.6 436.9) rotate(-78)"/>
<use href="#c" transform="translate(727 412.9) rotate(-92)"/>
<use href="#c" transform="translate(717 389.8) rotate(-120)"/>
<use href="#c" transform="translate(700.5 368.3) rotate(-140)"/>
<use href="#c" transform="translate(814.4 260.6) rotate(145)"/>
<use href="#c" transform="translate(794.5 275.5) rotate(145)"/>
<use href="#c" transform="translate(775 290) rotate(145)"/>
<use href="#c" transform="translate(754 303) rotate(145)"/>
<use href="#c" transform="translate(726 323.8) rotate(145)"/>
<use href="#c" transform="translate(704.5 336.2) rotate(145)"/>
<use href="#c" transform="translate(318.5 637) rotate(-28.8)"/>
<use href="#c" transform="translate(340.5 624.5) rotate(-28.8)"/>
<use href="#c" transform="translate(361.6 614.5) rotate(-28.8)"/>
<use href="#c" transform="translate(384 604) rotate(-28.8)"/>
<use href="#c" transform="translate(406 593.2) rotate(-28.8)"/>
<use href="#c" transform="translate(428.4 583.2) rotate(-28.8)"/>
<use href="#c" transform="translate(450.8 572) rotate(-28.8)"/>
<use href="#c" transform="translate(471.9 559.6) rotate(-28.8)"/>
<use href="#c" transform="translate(494.3 545.9) rotate(-28.8)"/>
<use href="#c" transform="translate(535.4 523.5) rotate(-28.8)"/>
<use href="#c" transform="translate(720 495) rotate(-125)"/>
<g font-family="Liberation Sans,sans-serif" font-size="12.5px" fill="#000"><text x="11.5" y="623">0</text><text x="44.5" y="623">10m</text></g><path d="M18.5 628V635.5H50.5V628" fill="none" stroke="#000" stroke-width="1"/>
</svg>
</div>
<!-- frame around map -->
<div class="a wl" style="left:5px;top:119px;width:1357px;height:1px"></div>
<div class="a wl" style="left:5px;top:643px;width:1357px;height:1px"></div>
<div class="a wl" style="left:1361px;top:119px;width:1px;height:525px"></div>
<div class="a wl" style="left:4px;top:119px;width:1px;height:525px"></div>
<div class="a wl" style="left:1px;top:647px;width:1365px;height:1px"></div>
<div class="a wl" style="left:1365px;top:82px;width:1px;height:566px"></div>
<!-- messages -->
<div id="msg"></div>
<div class="t g" style="left:3px;top:652px;letter-spacing:0.1px">Loading configuration ... done.</div>
<div class="t g" style="left:3px;top:667px;letter-spacing:0.04px">Loading net-file from 'C:\Users\¤Amanda\Desktop\Ceilandia\Cenário Atual\map.net.xml' ... done (18718ms).</div>
<div class="t g" style="left:3px;top:682px;letter-spacing:0.1px">Loading done.</div>
<div class="a" style="left:1351px;top:652px;width:15px;height:46px;background:#f8f8f8"></div>
<div class="rais2" style="left:1351px;top:652px;width:15px;height:15px"></div>
<div class="rais2" style="left:1351px;top:675px;width:15px;height:5px"></div>
<div class="rais2" style="left:1351px;top:683px;width:15px;height:15px"></div>
<div class="tri-u" style="left:1354px;top:657px"></div>
<div class="tri-d" style="left:1354px;top:688px"></div>
<!-- status bar -->
<div class="sb" style="left:4px;width:1020px"></div>
<div class="t" style="left:9px;top:706px;letter-spacing:0.08px">'C:\Users\¤Amanda\Desktop\Ceilandia\Cenário Atual\sumo.sumocfg' loaded.</div>
<div class="rais2" style="left:1029px;top:701px;width:52px;height:24px"></div>
<svg class="a" style="left:1033px;top:712px" width="16" height="9" viewBox="0 0 16 9"><path d="M1 7 V4.500 L4 3.500 L6 1 H10 L12.500 3.500 L15 4.500 V7 Z" fill="#00e000" stroke="#000" stroke-width="1"/><rect x="6" y="2" width="2" height="2" fill="#c03030"/><rect x="9" y="2" width="2" height="2" fill="#c03030"/><rect x="3" y="7" width="2" height="2" fill="#000"/><rect x="11" y="7" width="2" height="2" fill="#000"/></svg>
<div class="t" style="left:1054px;top:706px;letter-spacing:-0.9px">7677</div>
<div class="sb" style="left:1085px;width:113px"></div>
<div class="t" style="left:1088px;top:706px;letter-spacing:-0.6px">x:10588.77, y:8374.43</div>
<div class="sb" style="left:1202px;width:160px"></div>
<div class="t" style="left:1206px;top:706px;letter-spacing:-0.33px">lat:-15.797099, lon:-48.117153</div>
</body>
</html>
